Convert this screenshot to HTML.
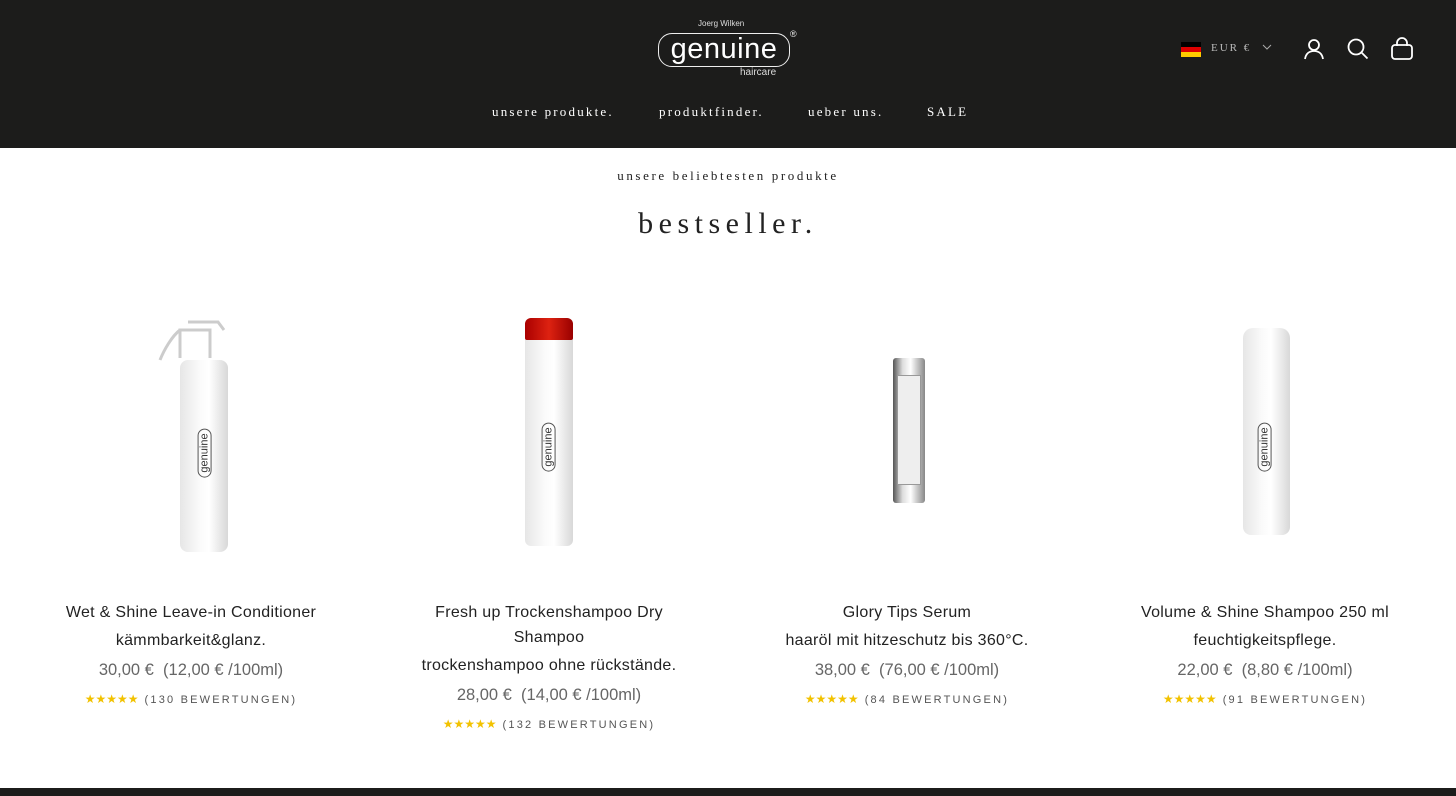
<!DOCTYPE html>
<html><head><meta charset="utf-8"><style>
*{margin:0;padding:0;box-sizing:border-box}
body{width:1456px;height:796px;overflow:hidden;background:#fff;font-family:"Liberation Sans",sans-serif;position:relative}
.hdr{position:absolute;left:0;top:0;width:1456px;height:148px;background:#1c1c1b}
.nav{position:absolute;top:104px;font-family:"Liberation Serif",serif;color:#fff;font-size:13px;letter-spacing:2.2px}
.t{position:absolute;left:0;width:1456px;text-align:center;font-family:"Liberation Serif",serif;color:#222}
.card{position:absolute;width:300px;text-align:center;color:#222}
.card .n{font-size:16px;line-height:25px;letter-spacing:0.3px}
.card .s{font-size:16px;line-height:31px;letter-spacing:0.3px}
.card .p{font-size:16.5px;color:#666;line-height:28px}
.card .r{font-size:11px;letter-spacing:2.2px;color:#555;margin-top:8px}
.card .r b{color:#f2c200;letter-spacing:0;font-size:12px;font-weight:normal;margin-right:6px}
.b{position:absolute;background:linear-gradient(90deg,#e6e6e6,#fafafa 40%,#fff 60%,#d8d8d8);border-radius:6px}
.lbl{position:absolute;font-size:11px;color:#333;transform:rotate(-90deg);font-family:"Liberation Sans",sans-serif;border:1px solid #555;border-radius:7px;padding:0 4px;white-space:nowrap}
.foot{position:absolute;left:0;top:788px;width:1456px;height:8px;background:#1c1c1b}
</style></head><body>
<div class="hdr">
 <div style="position:absolute;left:698px;top:19px;color:#ddd;font-size:8px">Joerg Wilken</div>
 <div style="position:absolute;left:658px;top:33px;width:132px;height:34px;border:1.5px solid #eee;border-radius:14px;color:#fff;font-size:29px;line-height:30px;text-align:center;letter-spacing:0.5px">genuine</div>
 <div style="position:absolute;left:790px;top:29px;color:#eee;font-size:9px">®</div>
 <div style="position:absolute;left:740px;top:67px;color:#ddd;font-size:10px">haircare</div>
 <div style="position:absolute;left:1181px;top:42px;width:20px;height:5px;background:#000"></div>
 <div style="position:absolute;left:1181px;top:47px;width:20px;height:5px;background:#d00"></div>
 <div style="position:absolute;left:1181px;top:52px;width:20px;height:5px;background:#fc0"></div>
 <div style="position:absolute;left:1211px;top:42px;color:#bbb;font-family:'Liberation Serif',serif;font-size:11px;letter-spacing:2px">EUR €</div>
 <svg style="position:absolute;left:1262px;top:44px" width="10" height="7"><path d="M1 1l4 4 4-4" stroke="#aaa" fill="none"/></svg>
 <svg style="position:absolute;left:1302px;top:37px" width="24" height="24" fill="none" stroke="#fff" stroke-width="1.8"><circle cx="12" cy="8" r="5"/><path d="M3 22c1-6 5-8 9-8s8 2 9 8"/></svg>
 <svg style="position:absolute;left:1346px;top:37px" width="24" height="24" fill="none" stroke="#fff" stroke-width="1.8"><circle cx="10" cy="10" r="7.5"/><path d="M15.5 15.5l6 6"/></svg>
 <svg style="position:absolute;left:1390px;top:36px" width="24" height="26" fill="none" stroke="#fff" stroke-width="1.8"><path d="M7 10V7a5 5 0 0110 0v3"/><rect x="2" y="9" width="20" height="14" rx="3"/></svg>
 <div class="nav" style="left:492px">unsere produkte.</div>
 <div class="nav" style="left:659px">produktfinder.</div>
 <div class="nav" style="left:808px">ueber uns.</div>
 <div class="nav" style="left:927px">SALE</div>
</div>
<div class="t" style="top:168px;font-size:13px;letter-spacing:2.6px">unsere beliebtesten produkte</div>
<div class="t" style="top:207px;font-size:30px;letter-spacing:5.5px">bestseller.</div>

<svg style="position:absolute;left:158px;top:310px" width="72" height="60" fill="none" stroke="#ccc" stroke-width="3"><path d="M22 48V20h30v28M22 20c-8 6-16 20-20 30M30 12h30l6 8"/></svg>
<div class="b" style="left:180px;top:360px;width:48px;height:192px;border-radius:8px"></div>
<div class="lbl" style="left:180px;top:446px">genuine</div>
<div class="b" style="left:525px;top:318px;width:48px;height:228px"></div>
<div style="position:absolute;left:525px;top:318px;width:48px;height:22px;background:linear-gradient(90deg,#a00,#d21 50%,#900);border-radius:6px 6px 2px 2px"></div>
<div class="lbl" style="left:524px;top:440px">genuine</div>
<div style="position:absolute;left:893px;top:358px;width:32px;height:145px;background:linear-gradient(90deg,#555,#ddd 30%,#fff 55%,#888);border-radius:3px"></div>
<div style="position:absolute;left:897px;top:375px;width:24px;height:110px;background:#eee;border:1px solid #999"></div>
<div class="b" style="left:1243px;top:328px;width:47px;height:207px;border-radius:10px 10px 8px 8px"></div>
<div class="lbl" style="left:1240px;top:440px">genuine</div>

<div class="card" style="left:41px;top:600px"><div class="n">Wet &amp; Shine Leave-in Conditioner</div><div class="s">kämmbarkeit&amp;glanz.</div><div class="p">30,00 €&nbsp; (12,00 € /100ml)</div><div class="r"><b>★★★★★</b>(130 BEWERTUNGEN)</div></div>
<div class="card" style="left:399px;top:600px"><div class="n">Fresh up Trockenshampoo Dry<br>Shampoo</div><div class="s">trockenshampoo ohne rückstände.</div><div class="p">28,00 €&nbsp; (14,00 € /100ml)</div><div class="r"><b>★★★★★</b>(132 BEWERTUNGEN)</div></div>
<div class="card" style="left:757px;top:600px"><div class="n">Glory Tips Serum</div><div class="s">haaröl mit hitzeschutz bis 360°C.</div><div class="p">38,00 €&nbsp; (76,00 € /100ml)</div><div class="r"><b>★★★★★</b>(84 BEWERTUNGEN)</div></div>
<div class="card" style="left:1115px;top:600px"><div class="n">Volume &amp; Shine Shampoo 250 ml</div><div class="s">feuchtigkeitspflege.</div><div class="p">22,00 €&nbsp; (8,80 € /100ml)</div><div class="r"><b>★★★★★</b>(91 BEWERTUNGEN)</div></div>
<div class="foot"></div>
</body></html>
